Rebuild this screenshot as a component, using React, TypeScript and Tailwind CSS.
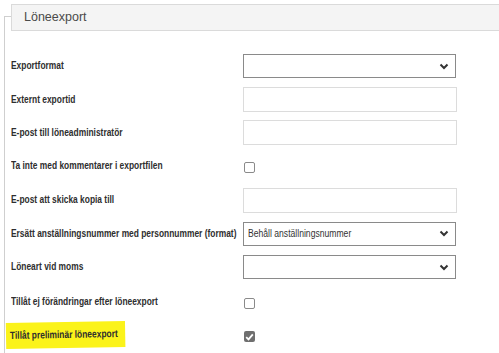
import React from 'react';

const font = { fontFamily: '"Liberation Sans", Arial, sans-serif' };

const Chevron = () => (
  <svg width="10" height="7" viewBox="0 0 10 7" className="text-[#333]">
    <path d="M1.5 1.5 L5 5 L8.5 1.5" fill="none" stroke="currentColor" strokeWidth="2" />
  </svg>
);

const Select = ({ value }: { value?: string }) => (
  <div className="w-[213px] h-[24px] border border-[#8a8a8a] bg-white flex items-center justify-between pl-[4px] pr-[6px]">
    <span className="inline-block whitespace-nowrap origin-left scale-x-[0.86] text-[10px] text-[#333]">{value}</span>
    <Chevron />
  </div>
);

const Input = () => <div className="w-[214px] h-[25px] border border-[#dcdcdc] bg-white" />;

const Checkbox = ({ checked }: { checked?: boolean }) =>
  checked ? (
    <div className="ml-[1px] mt-[1px] w-[11px] h-[11px] rounded-[2px] bg-[#6f6f6f] flex items-center justify-center">
      <svg width="9" height="8" viewBox="0 0 9 8">
        <path d="M1.2 4.2 L3.5 6.4 L7.8 1.4" fill="none" stroke="white" strokeWidth="1.8" />
      </svg>
    </div>
  ) : (
    <div className="ml-[1px] mt-[3px] w-[11px] h-[11px] rounded-[2px] border border-[#8a8a8a] bg-white" />
  );

type Row = { label: string; control: React.ReactNode; h: string; mark?: boolean };

const rows: Row[] = [
  { label: 'Exportformat', control: <Select />, h: 'h-[34px]' },
  { label: 'Externt exportid', control: <Input />, h: 'h-[33px]' },
  { label: 'E-post till löneadministratör', control: <Input />, h: 'h-[33px]' },
  { label: 'Ta inte med kommentarer i exportfilen', control: <Checkbox />, h: 'h-[34px]' },
  { label: 'E-post att skicka kopia till', control: <Input />, h: 'h-[34px]' },
  { label: 'Ersätt anställningsnummer med personnummer (format)', control: <Select value="Behåll anställningsnummer" />, h: 'h-[33px]' },
  { label: 'Löneart vid moms', control: <Select />, h: 'h-[34px]' },
  { label: 'Tillåt ej förändringar efter löneexport', control: <Checkbox />, h: 'h-[35px]' },
  { label: 'Tillåt preliminär löneexport', control: <Checkbox checked />, h: 'h-[34px]', mark: true },
];

export default function App() {
  return (
    <div className="w-[499px] h-[353px] overflow-hidden bg-white pt-[16px] pl-[4px]" style={font}>
      <div className="border-l border-t border-[#cfcfcf] h-full">
        {/* section header */}
        <div className="-mt-[13px] ml-[6px] h-[27px] bg-[#f4f4f4] border border-r-0 border-[#dadada] flex items-center pl-[12px] text-[12.5px] text-[#4a4a4a]">
          Löneexport
        </div>

        <div className="mt-[18px] pl-[6px]">
          {rows.map((r) => (
            <div key={r.label} className={`flex items-center ${r.h}`}>
              <div className="w-[232px] shrink-0 text-[10.5px] font-bold text-[#2e2e2e]">
                {r.mark ? (
                  <span className="inline-block whitespace-nowrap origin-left scale-x-[0.8] -rotate-1 -ml-[5px] pl-[5px] pr-[9px] py-[5px] bg-[#fbf31a]">
                    {r.label}
                  </span>
                ) : (
                  <span className="inline-block whitespace-nowrap origin-left scale-x-[0.8]">{r.label}</span>
                )}
              </div>
              {r.control}
            </div>
          ))}
        </div>
      </div>
    </div>
  );
}
